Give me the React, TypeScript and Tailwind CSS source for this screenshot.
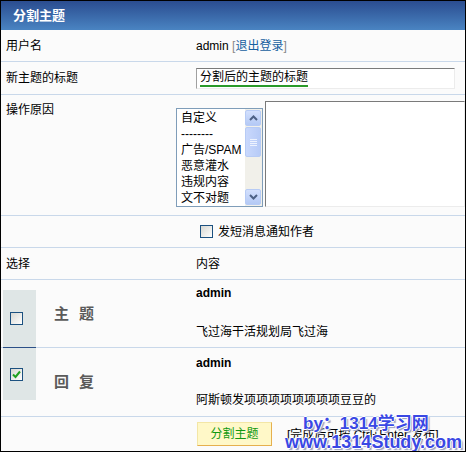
import React from "react";

const Check = ({ checked }: { checked?: boolean }) => (
  <span className="w-[13px] h-[13px] border border-[#1c5180] bg-linear-to-br from-[#d8d8d2] to-white flex items-center justify-center shrink-0">
    {checked && (
      <svg width="9" height="9" viewBox="0 0 9 9">
        <path d="M1 4.5 L3.5 7 L8 1.5" stroke="#21a121" strokeWidth="2" fill="none" />
      </svg>
    )}
  </span>
);

const ScrollBtn = ({ up }: { up?: boolean }) => (
  <div className="w-[16px] h-[16px] rounded-[2px] border border-[#b7cbf5] bg-linear-to-b from-[#d3e0fd] to-[#b4c9f5] flex items-center justify-center">
    <svg width="9" height="6" viewBox="0 0 9 6">
      <path d={up ? "M1 5 L4.5 1.5 L8 5" : "M1 1 L4.5 4.5 L8 1"} stroke="#4d6185" strokeWidth="2" fill="none" />
    </svg>
  </div>
);

const reasons = ["自定义", "--------", "广告/SPAM", "恶意灌水", "违规内容", "文不对题"];

export default function App() {
  return (
    <div className="w-[466px] h-[452px] border border-black bg-[#fbfbfb] overflow-hidden relative flex flex-col text-[12px] leading-4 text-black font-['Liberation_Sans','Noto_Sans_CJK_SC',sans-serif]">
      <div className="h-[29px] shrink-0 bg-linear-to-b from-[#2b4d90] to-[#4a84c2] flex items-center pl-[12px] text-white font-bold text-[13px]">
        分割主题
      </div>

      <div className="h-[32px] shrink-0 flex items-center border-b border-[#c9d8ea]">
        <div className="w-[195px] pl-[5px]">用户名</div>
        <div>
          admin <span className="text-[#888]">[</span>
          <span className="text-[#175f9f]">退出登录</span>
          <span className="text-[#888]">]</span>
        </div>
      </div>

      <div className="h-[33px] shrink-0 flex items-center border-b border-[#c9d8ea]">
        <div className="w-[195px] pl-[5px]">新主题的标题</div>
        <div className="w-[259px] h-[21px] border border-[#ececec] border-t-[#7a7a7a] border-l-[#a0a0a0] bg-white pl-[3px] flex items-center">
          <span className="border-b-2 border-[#2a9a2a] leading-[15px]">分割后的主题的标题</span>
        </div>
      </div>

      <div className="h-[121px] shrink-0 flex border-b border-[#c9d8ea]">
        <div className="w-[195px] pl-[5px] pt-[7px]">操作原因</div>
        <div className="mt-[13px] w-[97px] h-[99px] border border-[#7f9db9] bg-white flex">
          <div className="flex-1 pl-[4px] pt-[1px]">
            {reasons.map((r) => (
              <div key={r} className="h-[16px] leading-[16px]">
                {r}
              </div>
            ))}
          </div>
          <div className="w-[17px] py-[1px] pr-[1px] bg-[#f1f0ea] flex flex-col justify-between">
            <div>
              <ScrollBtn up />
              <div className="mt-[1px] w-[16px] h-[30px] rounded-[2px] border border-[#b7cbf5] bg-linear-to-r from-[#c9d8fc] to-[#b7cbf7] flex flex-col items-center justify-center gap-[1px]">
                <div className="w-[7px] h-px bg-[#eef3fe]" />
                <div className="w-[7px] h-px bg-[#eef3fe]" />
                <div className="w-[7px] h-px bg-[#eef3fe]" />
                <div className="w-[7px] h-px bg-[#eef3fe]" />
              </div>
            </div>
            <ScrollBtn />
          </div>
        </div>
        <div className="ml-[2px] mt-[6px] w-[200px] h-[106px] shrink-0 border border-[#ececec] border-t-[#7a7a7a] border-l-[#7a7a7a] bg-white" />
      </div>

      <div className="h-[32px] shrink-0 flex items-center border-b border-[#c9d8ea]">
        <div className="w-[199px]" />
        <Check />
        <span className="ml-[5px]">发短消息通知作者</span>
      </div>

      <div className="h-[32px] shrink-0 flex items-center border-b border-[#c9d8ea]">
        <div className="w-[195px] pl-[5px]">选择</div>
        <div>内容</div>
      </div>

      <div className="h-[68px] shrink-0 flex border-b border-[#c9d8ea]">
        <div className="ml-[2px] mt-[10px] -mb-px w-[33px] bg-[#dfe6e6] border-b border-[#2b4f87] flex items-center pl-[7px]">
          <Check />
        </div>
        <div className="w-[160px] pl-[18px] flex items-center text-[15px] font-bold text-[#5a5a5a] tracking-[10px]">主题</div>
        <div className="flex flex-col pt-[5px]">
          <div className="font-bold">admin</div>
          <div className="mt-[23px]">飞过海干活规划局飞过海</div>
        </div>
      </div>

      <div className="h-[69px] shrink-0 flex border-b border-[#c9d8ea]">
        <div className="ml-[2px] mb-[16px] w-[33px] bg-[#dfe6e6] flex items-center pl-[7px]">
          <Check checked />
        </div>
        <div className="w-[160px] pl-[18px] flex items-center text-[15px] font-bold text-[#5a5a5a] tracking-[10px]">回复</div>
        <div className="flex flex-col pt-[7px]">
          <div className="font-bold">admin</div>
          <div className="mt-[21px]">阿斯顿发项项项项项项项项豆豆的</div>
        </div>
      </div>

      <div className="flex-1 flex items-start">
        <div className="w-[196px]" />
        <button className="mt-[5px] w-[75px] h-[24px] bg-[#fff8c8] border border-[#f3e6a6] border-r-[#e6b04e] border-b-[#e6b04e] text-[#119a11]">
          分割主题
        </button>
        <span className="ml-[15px] mt-[10px]">[完成后可按 Ctrl+Enter 发布]</span>
      </div>

      <div className="absolute left-[302px] top-[413px] text-[17px] leading-[20px] font-bold text-[#3a48e4] [text-shadow:1px_0_0_#fff,-1px_0_0_#fff,0_1px_0_#fff,0_-1px_0_#fff,2px_2px_1px_#9aa0c0]">
        by：1314学习网
      </div>
      <div className="absolute left-[284px] top-[431px] text-[18px] leading-[20px] font-bold text-[#3a48e4] [text-shadow:1px_0_0_#fff,-1px_0_0_#fff,0_1px_0_#fff,0_-1px_0_#fff,2px_2px_1px_#9aa0c0]">
        www.1314Study.com
      </div>
    </div>
  );
}
